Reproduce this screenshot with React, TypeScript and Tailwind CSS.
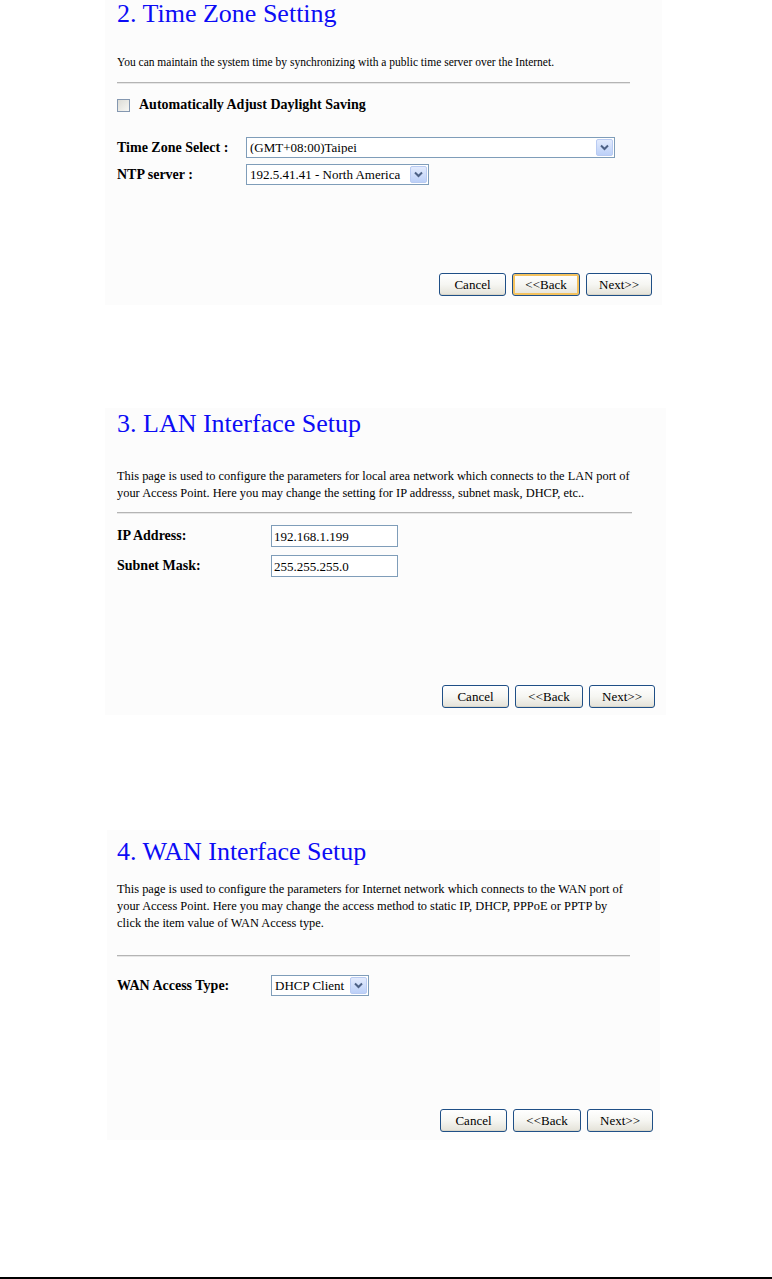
import React from "react";

const serif = { fontFamily: '"Liberation Serif", "Times New Roman", serif' };

function Chevron() {
  return (
    <svg width="9" height="7" viewBox="0 0 9 7">
      <path d="M1 1.5 L4.5 5 L8 1.5" stroke="#4d6185" strokeWidth="2" fill="none" />
    </svg>
  );
}

function Select({ value, className }: { value: string; className: string }) {
  return (
    <div className={`flex h-[21px] items-center border border-[#7f9db9] bg-white ${className}`}>
      <span className="flex-1 truncate pl-[3px] text-[13px] leading-none text-black">{value}</span>
      <span className="mr-[1px] flex h-[17px] w-[17px] items-center justify-center rounded-[2px] border border-[#b9cbf2] bg-gradient-to-b from-[#e3ebfd] to-[#bcd0f8]">
        <Chevron />
      </span>
    </div>
  );
}

function TextInput({ value }: { value: string }) {
  return (
    <div className="flex h-[22px] w-[127px] items-center border border-[#7f9db9] bg-white pl-[2px] text-[13px] leading-none text-black">
      {value}
    </div>
  );
}

function Btn({ label, focus, className }: { label: string; focus?: boolean; className: string }) {
  return (
    <button
      className={`flex h-[23px] items-center justify-center rounded-[3px] border border-[#1f4f86] bg-gradient-to-b from-[#ffffff] via-[#f6f6f2] to-[#e4e2d8] text-[13px] leading-none text-black ${
        focus ? "shadow-[inset_0_0_0_2px_#f4c25e]" : "shadow-[inset_0_-1px_0_#d8d5c8]"
      } ${className}`}
      style={serif}
    >
      {label}
    </button>
  );
}

function Buttons({ focusBack }: { focusBack?: boolean }) {
  return (
    <div className="mt-auto flex justify-end gap-[6px]">
      <Btn label="Cancel" className="w-[67px]" />
      <Btn label="<<Back" focus={focusBack} className="w-[68px]" />
      <Btn label="Next>>" className="w-[66px]" />
    </div>
  );
}

function Title({ children }: { children: React.ReactNode }) {
  return <h1 className="h-[28px] text-[26px] leading-[28px] text-[#0c0cf5]">{children}</h1>;
}

function Rule({ className }: { className: string }) {
  return <div className={`h-[2px] border-t border-b border-t-[#b4b4b4] border-b-[#e6e6e6] ${className}`} />;
}

export default function App() {
  return (
    <div className="flex h-[1279px] w-[772px] flex-col bg-white text-black" style={serif}>
      {/* Panel 2 */}
      <section className="ml-[105px] flex h-[305px] w-[557px] flex-col bg-[#fcfcfc] pb-[9px] pl-[12px] pr-[10px]">
        <div className="mt-[0px]">
          <Title>2. Time Zone Setting</Title>
        </div>
        <p className="mt-[27px] text-[11.5px] leading-[14px]">
          You can maintain the system time by synchronizing with a public time server over the Internet.
        </p>
        <Rule className="mt-[13px] w-[513px]" />
        <div className="mt-[13px] flex h-[16px] items-center">
          <span className="h-[13px] w-[13px] border border-[#8497b0] bg-gradient-to-br from-[#dcdcd6] to-[#f7f7f4]" />
          <span className="ml-[9px] text-[14px] font-bold leading-none">Automatically Adjust Daylight Saving</span>
        </div>
        <div className="mt-[24px] flex items-center">
          <span className="w-[129px] text-[14px] font-bold leading-none">Time Zone Select :</span>
          <Select value="(GMT+08:00)Taipei" className="w-[369px]" />
        </div>
        <div className="mt-[6px] flex items-center">
          <span className="w-[129px] text-[14px] font-bold leading-none">NTP server :</span>
          <Select value="192.5.41.41 - North America" className="w-[183px]" />
        </div>
        <Buttons focusBack />
      </section>

      {/* Panel 3 */}
      <section className="ml-[105px] mt-[103px] flex h-[307px] w-[561px] flex-col bg-[#fcfcfc] pb-[7px] pl-[12px] pr-[11px]">
        <div className="mt-[2px]">
          <Title>3. LAN Interface Setup</Title>
        </div>
        <p className="mt-[30px] text-[12.4px] leading-[17px]">
          This page is used to configure the parameters for local area network which connects to the LAN port of
          <br />
          your Access Point. Here you may change the setting for IP addresss, subnet mask, DHCP, etc..
        </p>
        <Rule className="mt-[10px] w-[515px]" />
        <div className="mt-[11px] flex items-center">
          <span className="w-[154px] text-[14px] font-bold leading-none">IP Address:</span>
          <TextInput value="192.168.1.199" />
        </div>
        <div className="mt-[8px] flex items-center">
          <span className="w-[154px] text-[14px] font-bold leading-none">Subnet Mask:</span>
          <TextInput value="255.255.255.0" />
        </div>
        <Buttons />
      </section>

      {/* Panel 4 */}
      <section className="ml-[107px] mt-[115px] flex h-[310px] w-[553px] flex-col bg-[#fcfcfc] pb-[8px] pl-[10px] pr-[7px]">
        <div className="mt-[8px]">
          <Title>4. WAN Interface Setup</Title>
        </div>
        <p className="mt-[15px] text-[12.4px] leading-[17px]">
          This page is used to configure the parameters for Internet network which connects to the WAN port of
          <br />
          your Access Point. Here you may change the access method to static IP, DHCP, PPPoE or PPTP by
          <br />
          click the item value of WAN Access type.
        </p>
        <Rule className="mt-[23px] w-[513px]" />
        <div className="mt-[18px] flex items-center">
          <span className="w-[154px] text-[14px] font-bold leading-none">WAN Access Type:</span>
          <Select value="DHCP Client" className="w-[98px]" />
        </div>
        <Buttons />
      </section>

      <div className="mt-auto h-[2px] w-full bg-black" />
    </div>
  );
}
